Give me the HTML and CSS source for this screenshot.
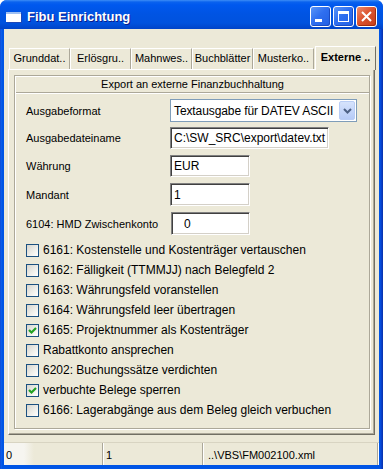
FILE: index.html
```html
<!DOCTYPE html>
<html lang="de">
<head>
  <meta charset="UTF-8" />
  <title>Fibu Einrichtung</title>
  <link rel="stylesheet" href="styles.css">
</head>
<body>

  <div class="window">
    <div class="titlebar">
      <svg class="app-icon" width="16" height="11" viewBox="0 0 16 11">
        <rect x="0" y="0" width="15" height="10" fill="#ffffff" />
        <rect x="0" y="0" width="15" height="2" fill="#9fc0f2" />
        <rect x="15" y="1" width="1" height="10" fill="#1d47b8" />
        <rect x="1" y="10" width="15" height="1" fill="#1d47b8" />
      </svg>
      <span class="title">Fibu Einrichtung</span>
      <div class="caption-buttons">
        <span class="cap-btn">
          <svg width="19" height="19" viewBox="0 0 19 19"><rect x="4" y="12" width="7" height="3" fill="#fff" /></svg>
        </span>
        <span class="cap-btn">
          <svg width="19" height="19" viewBox="0 0 19 19">
            <rect x="4.5" y="4.5" width="10" height="10" fill="none" stroke="#fff" stroke-width="1" />
            <rect x="4" y="4" width="11" height="3" fill="#fff" />
          </svg>
        </span>
        <span class="cap-btn close">
          <svg width="19" height="19" viewBox="0 0 19 19">
            <path d="M5 5 L14 14 M14 5 L5 14" stroke="#fff" stroke-width="2" />
          </svg>
        </span>
      </div>
    </div>

    <div class="client">
      <div class="tabs">
        <div class="tab">Grunddat..</div>
        <div class="tab">Erlösgru..</div>
        <div class="tab">Mahnwes..</div>
        <div class="tab">Buchblätter</div>
        <div class="tab">Musterko..</div>
        <div class="tab active">Externe ..</div>
      </div>

      <div class="page">
        <div class="group">
          <div class="group-head">Export an externe Finanzbuchhaltung</div>

          <div class="field row-format">
            <label>Ausgabeformat</label>
            <div class="combo">
              <span class="combo-text">Textausgabe für DATEV ASCII</span>
              <span class="combo-btn">
                <svg width="9" height="6" viewBox="0 0 9 6"><path d="M1 1 L4.5 4.5 L8 1" fill="none" stroke="#4d6185" stroke-width="2" /></svg>
              </span>
            </div>
          </div>

          <div class="field row-file">
            <label>Ausgabedateiname</label>
            <div class="edit wide">C:\SW_SRC\export\datev.txt</div>
          </div>

          <div class="field row-currency">
            <label>Währung</label>
            <div class="edit">EUR</div>
          </div>

          <div class="field row-client">
            <label>Mandant</label>
            <div class="edit tall">1</div>
          </div>

          <div class="field row-hmd">
            <label>6104: HMD Zwischenkonto</label>
            <div class="edit tall indent">0</div>
          </div>

          <div class="checks">
            <div class="check"><span class="box"></span>6161: Kostenstelle und Kostenträger vertauschen</div>
            <div class="check"><span class="box"></span>6162: Fälligkeit (TTMMJJ) nach Belegfeld 2</div>
            <div class="check"><span class="box"></span>6163: Währungsfeld voranstellen</div>
            <div class="check"><span class="box"></span>6164: Währungsfeld leer übertragen</div>
            <div class="check"><span class="box checked"><svg width="11" height="11" viewBox="0 0 11 11"><path d="M2 5 L4.5 7.5 L9 3" fill="none" stroke="#21a121" stroke-width="2.2" /></svg></span>6165: Projektnummer als Kostenträger</div>
            <div class="check"><span class="box"></span>Rabattkonto ansprechen</div>
            <div class="check"><span class="box"></span>6202: Buchungssätze verdichten</div>
            <div class="check"><span class="box checked"><svg width="11" height="11" viewBox="0 0 11 11"><path d="M2 5 L4.5 7.5 L9 3" fill="none" stroke="#21a121" stroke-width="2.2" /></svg></span>verbuchte Belege sperren</div>
            <div class="check"><span class="box"></span>6166: Lagerabgänge aus dem Beleg gleich verbuchen</div>
          </div>
        </div>
      </div>

      <div class="statusbar">
        <div class="sb-cell first">0</div>
        <div class="sb-cell second">1</div>
        <div class="sb-cell third">..\VBS\FM002100.xml</div>
      </div>
    </div>
  </div>

</body>
</html>
```

FILE: styles.css
```css
/* Base */
* {
  box-sizing: border-box;
}

body {
  margin: 0;
  font-family: "Liberation Sans", Arial, sans-serif;
  font-size: 11px;
  color: #000;
  background: #fff;
}

/* Window frame */
.window {
  width: 383px;
  height: 469px;
  display: flex;
  flex-direction: column;
  border-radius: 7px 7px 0 0;
  overflow: hidden;
  background: linear-gradient(to right, #0a3fcc 0, #1464ec 1px, #0055e5 2px, #0055e5 380px, #0a44d4 381px, #0831a8 383px);
}

.titlebar {
  height: 29px;
  flex: none;
  display: flex;
  align-items: center;
  padding: 3px 6px 0 6px;
  background: linear-gradient(#3d8df6 0, #0a62ee 2px, #0058ee 5px, #0054e3 14px, #0052de 23px, #0043c8 29px);
}

.app-icon {
  flex: none;
  margin-top: 2px;
}

.title {
  margin-left: 5px;
  font-size: 13px;
  font-weight: bold;
  color: #fff;
  text-shadow: 1px 1px 0 #0a1c8c;
  flex: 1;
}

.caption-buttons {
  display: flex;
  gap: 2px;
}

.cap-btn {
  width: 21px;
  height: 21px;
  border: 1px solid #fff;
  border-radius: 3px;
  background: linear-gradient(135deg, #5a95f7 0, #2f6ff0 45%, #215fe3 100%);
  box-shadow: inset -1px -1px 0 #1a4bc4;
}

.cap-btn svg {
  display: block;
}

.cap-btn.close {
  background: linear-gradient(135deg, #ec8a6c 0, #dc5430 45%, #c43d18 100%);
  box-shadow: inset -1px -1px 0 #a52d0e;
}

/* Client area */
.client {
  flex: 1;
  margin: 0 4px 4px 4px;
  background: #ece9d8;
  display: flex;
  flex-direction: column;
}

.tabs {
  display: flex;
  align-items: flex-end;
  height: 23px;
  margin: 17px 0 0 5px;
  position: relative;
  z-index: 1;
}

.tab {
  width: 61px;
  height: 21px;
  border-top: 1px solid #fff;
  border-left: 1px solid #fff;
  border-right: 1px solid #aca899;
  text-align: center;
  line-height: 19px;
  white-space: nowrap;
  overflow: hidden;
  background: #ece9d8;
}

.tab.active {
  width: 61px;
  height: 24px;
  margin-bottom: -1px;
  margin-left: 1px;
  font-weight: bold;
  line-height: 20px;
  border-right: 1px solid #716f64;
}

.page {
  height: 366px;
  margin: 0 4px;
  padding: 5px 0 0 5px;
  border: 1px solid;
  border-color: #fff #716f64 #716f64 #fff;
  box-shadow: inset -1px -1px 0 #aca899;
}

/* Group box */
.group {
  width: 356px;
  height: 354px;
  border: 1px solid #aca899;
  box-shadow: inset 1px 1px 0 #fff, 1px 1px 0 #fff;
}

.group-head {
  height: 17px;
  border-bottom: 1px solid #aca899;
  box-shadow: 0 1px 0 #fff;
  text-align: center;
  line-height: 16px;
  margin-left: 1px;
}

.field {
  display: flex;
  align-items: center;
  padding-left: 11px;
}

.field label {
  width: 144px;
  flex: none;
}

.row-format {
  margin-top: 6px;
}

.row-file {
  margin-top: 5px;
}

.row-currency,
.row-client,
.row-hmd {
  margin-top: 6px;
}

.combo {
  width: 187px;
  height: 23px;
  display: flex;
  align-items: center;
  border: 1px solid #7f9db9;
  background: #fff;
  font-size: 12px;
  padding: 0 1px 0 3px;
}

.combo-text {
  flex: 1;
  white-space: nowrap;
  letter-spacing: -0.1px;
}

.combo-btn {
  width: 16px;
  height: 19px;
  flex: none;
  display: flex;
  align-items: center;
  justify-content: center;
  border: 1px solid #b9cdf5;
  border-radius: 2px;
  background: linear-gradient(#d6e3fc, #b6cbf7);
}

.edit {
  width: 80px;
  height: 22px;
  display: flex;
  align-items: center;
  padding-left: 3px;
  font-size: 12px;
  background: #fff;
  border: 1px solid;
  border-color: #808080 #fff #fff #808080;
  box-shadow: inset 1px 1px 0 #404040, inset -1px -1px 0 #d4d0c8;
  white-space: nowrap;
  overflow: hidden;
}

.edit.wide {
  width: 159px;
}

.edit.tall {
  height: 23px;
}

.edit.indent {
  width: 79px;
  margin-left: 1px;
  padding-left: 12px;
}

/* Check boxes */
.checks {
  margin-top: 5px;
  padding-left: 11px;
}

.check {
  height: 20px;
  display: flex;
  align-items: center;
  font-size: 12px;
  white-space: nowrap;
}

.box {
  width: 13px;
  height: 13px;
  flex: none;
  margin-right: 4px;
  border: 1px solid #1c5180;
  background: linear-gradient(135deg, #d6d5ce 0, #f4f4f0 70%, #fff 100%);
}

.box svg {
  display: block;
}

/* Status bar */
.statusbar {
  height: 23px;
  margin-top: 7px;
  display: flex;
  border-top: 1px solid #d8d4c2;
}

.sb-cell {
  padding: 3px 0 0 2px;
  line-height: 18px;
  border-right: 1px solid #aca899;
  box-shadow: 1px 0 0 #fff;
  white-space: nowrap;
}

.sb-cell.first {
  width: 99px;
  background: linear-gradient(to right, #f6f5f0 0, #f6f5f0 20px, rgba(236, 233, 216, 0) 30px);
}

.sb-cell.second {
  width: 100px;
  padding-left: 3px;
}

.sb-cell.third {
  width: 175px;
  padding-left: 5px;
}
```
